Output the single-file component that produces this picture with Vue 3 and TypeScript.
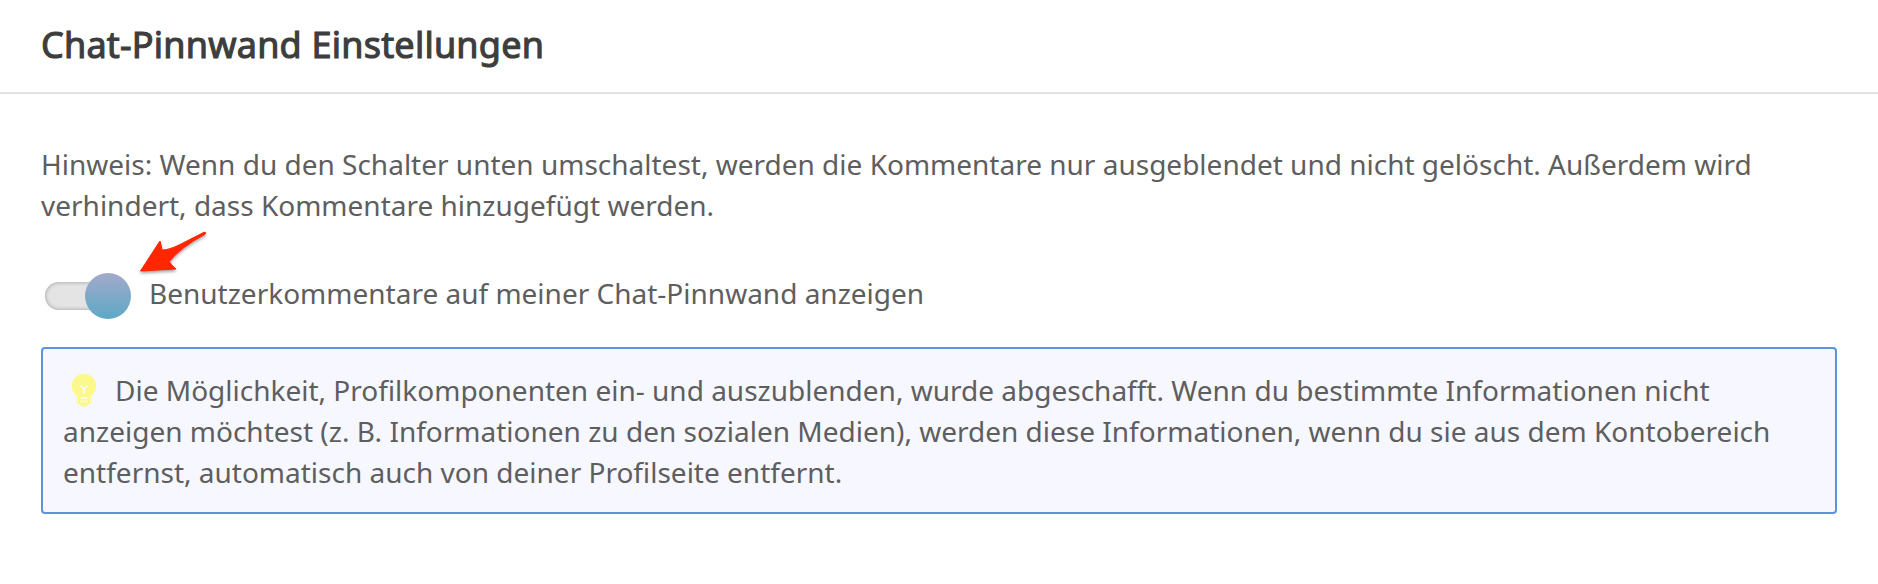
<script setup lang="ts">
const title = 'Chat-Pinnwand Einstellungen'
</script>

<template>
  <main class="page">
    <header class="header"><h1>{{ title }}</h1></header>
    <section class="content">
      <p class="hint">Hinweis: Wenn du den Schalter unten umschaltest, werden die Kommentare nur ausgeblendet und nicht gelöscht. Außerdem wird<br>verhindert, dass Kommentare hinzugefügt werden.</p>
      <div class="row">
        <button class="toggle" type="button" role="switch" aria-checked="true"><span class="track"></span><span class="knob"></span></button>
        <span class="label">Benutzerkommentare auf meiner Chat-Pinnwand anzeigen</span>
        <svg class="arrow" width="72" height="48" viewBox="0 0 72 48"><path d="M2.5 43L22 13Q23 16 24 22Q31 22 42 16.5L66 4.3Q69 4 67 6.3Q43 19 31.3 33.5Q33 37 38 41Z" fill="#ff2600" stroke="#ff2600" stroke-width="1" stroke-linejoin="round"/></svg>
      </div>
      <aside class="notice">
        <svg class="bulb" width="26" height="34" viewBox="0 0 26 34">
          <path d="M13 1A12.200 12 0 0 0 .8 13C.8 17.500 2.700 20.500 5.500 22.500Q6 23 6 24V29Q6 31 8.500 31.500Q10 34 13 34T17.500 31.500Q20 31 20 29V24Q20 23 20.500 22.500C23.300 20.500 25.200 17.500 25.200 13A12.200 12 0 0 0 13 1Z" fill="#fbf88c"/>
          <path d="M9.500 12.500L13 16L16.500 12.500M13 15.500V20.500M9.500 25H16.500M9.500 28.500H16.500" fill="none" stroke="#f9f9fb" stroke-width="1.700"/>
        </svg>Die Möglichkeit, Profilkomponenten ein- und auszublenden, wurde abgeschafft. Wenn du bestimmte Informationen nicht<br>anzeigen möchtest (z. B. Informationen zu den sozialen Medien), werden diese Informationen, wenn du sie aus dem Kontobereich<br>entfernst, automatisch auch von deiner Profilseite entfernt.
      </aside>
    </section>
  </main>
</template>

<style scoped>
.page { height: 584px; background: #fff; color: #5e5e5e; font: 28px/41px "Noto Sans", sans-serif; overflow: hidden; box-sizing: border-box; }
.header { box-sizing: border-box; height: 94px; border-bottom: 2px solid #e2e2e2; padding: 0 0 3px 41px; display: flex; align-items: center; }
h1 { margin: 0; font-size: 36px; font-weight: 400; letter-spacing: .21px; color: #3d3d3d; white-space: nowrap; -webkit-text-stroke: 1.1px #3d3d3d; }
.content { padding: 50px 41px 0; }
.hint { margin: 0; white-space: nowrap; }
.row { position: relative; display: flex; align-items: center; margin-top: 46px; height: 48px; gap: 18px; white-space: nowrap; }
.label { padding-bottom: 5px; }
.toggle { position: relative; width: 90px; height: 48px; border: 0; padding: 0; background: none; }
.track { position: absolute; left: 4px; top: 10px; width: 70px; height: 28px; border-radius: 14px; background: #e4e4e4; box-shadow: inset 0 0 4px #999; }
.knob { position: absolute; right: 0; top: 1px; width: 46px; height: 46px; border-radius: 50%; background: linear-gradient(#a3a9c9, #5ca9c7); }
.arrow { position: absolute; left: 97px; top: -44px; filter: drop-shadow(0 2px 1.5px rgba(0, 0, 0, .35)); }
.notice { box-sizing: border-box; height: 167px; margin-top: 27px; border: 2px solid #5b93dd; border-radius: 4px; background: #f7f7ff; padding: 21px 20px; white-space: nowrap; }
.bulb { vertical-align: -6px; margin: 0 18px 0 8px; }
</style>
